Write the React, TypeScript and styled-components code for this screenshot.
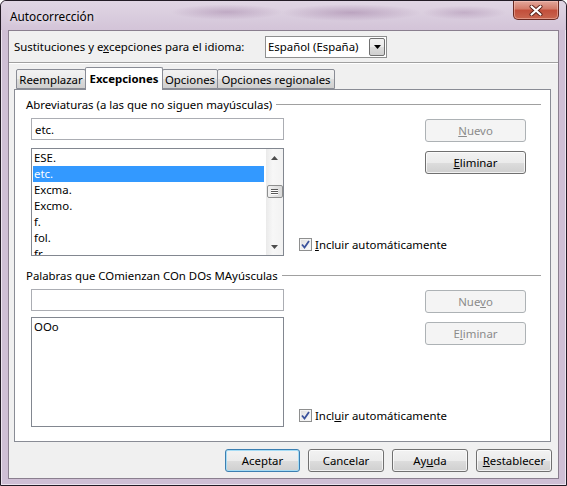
import styled, { createGlobalStyle } from "styled-components";

const GlobalStyle = createGlobalStyle`
	html, body {
		margin: 0;
		padding: 0;
		background: #ffffff;
	}
	body {
		font-family: "Noto Sans", "Open Sans", sans-serif;
		font-size: 11.4px;
		color: #000;
	}
	* {
		box-sizing: border-box;
	}
`;

const Window = styled.div`
	width: 567px;
	height: 486px;
	border: 1px solid #231c26;
	border-radius: 6px 6px 0 0;
	background: #cfbfd5;
	box-shadow: inset 0 0 0 1px #ece4ef;
	display: flex;
	flex-direction: column;
	padding: 0 7px 6px 7px;
	overflow: hidden;
`;

const TitleBar = styled.div`
	height: 29px;
	margin: 0 -7px;
	padding: 0 7px 0 9px;
	display: flex;
	align-items: flex-start;
	justify-content: space-between;
	border-radius: 5px 5px 0 0;
	background:
		radial-gradient(ellipse 100px 12px at 62% 40%, rgba(140, 100, 145, 0.4), transparent 70%),
		radial-gradient(ellipse 80px 11px at 40% 38%, rgba(140, 100, 145, 0.35), transparent 70%),
		radial-gradient(ellipse 60px 10px at 82% 40%, rgba(140, 100, 145, 0.3), transparent 70%),
		linear-gradient(to bottom, #e0d6e4, #d3c4d8);
`;

const Title = styled.span`
	align-self: center;
	font-size: 11.8px;
	color: #000;
	text-shadow: 0 0 6px rgba(255, 255, 255, 0.9);
`;

const CloseButton = styled.div`
	width: 46px;
	height: 19px;
	display: flex;
	align-items: center;
	justify-content: center;
	border: 1px solid #6a2a22;
	border-top: none;
	border-radius: 0 0 5px 5px;
	background: linear-gradient(to bottom, #e3a89c 0%, #d27a68 45%, #c24e3a 50%, #c86650 100%);
	box-shadow: inset 0 0 0 1px rgba(255, 210, 200, 0.45);
`;

const Client = styled.div`
	flex: 1;
	display: flex;
	flex-direction: column;
	border: 1px solid #8a7f8f;
	background: #f0f0f0;
`;

const LangRow = styled.div`
	height: 32px;
	display: flex;
	align-items: center;
	padding-left: 5px;
	border-bottom: 1px solid #a0a0a0;
	box-shadow: 0 1px 0 #ffffff;
`;

const LangLabel = styled.span`
	width: 251px;
`;

const Select = styled.div`
	width: 122px;
	height: 22px;
	display: flex;
	align-items: center;
	padding: 0 1px 0 2px;
	border: 1px solid #8e8f8f;
	background: #fff;
`;

const SelectText = styled.span`
	flex: 1;
`;

const DropButton = styled.div`
	width: 16px;
	height: 18px;
	display: flex;
	align-items: center;
	justify-content: center;
	border: 1px solid #707070;
	border-radius: 2px;
	background: linear-gradient(to bottom, #f2f2f2 0%, #ebebeb 50%, #dddddd 51%, #cfcfcf 100%);
`;

const Body = styled.div`
	flex: 1;
	display: flex;
	flex-direction: column;
	padding: 4px 7px 0 5px;
`;

const TabStrip = styled.div`
	height: 22px;
	display: flex;
	align-items: flex-end;
	padding-left: 2px;
`;

const Tab = styled.div<{ $active?: boolean; $w: number }>`
	position: relative;
	z-index: ${(p) => (p.$active ? 2 : 1)};
	width: ${(p) => p.$w}px;
	height: ${(p) => (p.$active ? 23 : 20)}px;
	margin-right: -1px;
	margin-bottom: ${(p) => (p.$active ? -1 : 0)}px;
	display: flex;
	align-items: center;
	justify-content: center;
	padding-bottom: ${(p) => (p.$active ? 2 : 0)}px;
	border: 1px solid #898c95;
	border-bottom: ${(p) => (p.$active ? "none" : "1px solid #898c95")};
	border-radius: 2px 2px 0 0;
	font-weight: ${(p) => (p.$active ? 700 : 400)};
	white-space: nowrap;
	background: ${(p) =>
		p.$active
			? "#ffffff"
			: "linear-gradient(to bottom, #f2f2f2 0%, #ebebeb 50%, #dddddd 51%, #cfcfcf 100%)"};
`;

const Panel = styled.div`
	flex: 1;
	display: flex;
	flex-direction: column;
	border: 1px solid #898c95;
	background: #ffffff;
	padding: 6px 9px 0 11px;
`;

const GroupTitle = styled.div<{ $top?: number }>`
	height: 16px;
	margin-top: ${(p) => p.$top ?? 0}px;
	display: flex;
	align-items: center;
	gap: 4px;
	white-space: nowrap;
	&::after {
		content: "";
		flex: 1;
		border-top: 1px solid #a0a0a0;
	}
`;

const GroupBody = styled.div`
	margin-top: 6px;
	padding-left: 5px;
	display: flex;
	gap: 15px;
`;

const LeftCol = styled.div<{ $gap: number }>`
	width: 253px;
	display: flex;
	flex-direction: column;
	gap: ${(p) => p.$gap}px;
`;

const RightCol = styled.div`
	width: 227px;
	display: flex;
	flex-direction: column;
	align-items: flex-end;
	gap: 9px;
	padding-top: 1px;
`;

const TextBox = styled.div`
	height: 22px;
	display: flex;
	align-items: center;
	padding-left: 3px;
	border: 1px solid #abadb3;
	background: #fff;
`;

const ListBox = styled.div<{ $h: number }>`
	height: ${(p) => p.$h}px;
	display: flex;
	border: 1px solid #828790;
	background: #fff;
	overflow: hidden;
`;

const Items = styled.div`
	flex: 1;
	padding: 1px 2px 0 1px;
`;

const Item = styled.div<{ $selected?: boolean }>`
	height: 16px;
	line-height: 16px;
	padding-left: 1px;
	white-space: nowrap;
	background: ${(p) => (p.$selected ? "#3399ff" : "transparent")};
	color: ${(p) => (p.$selected ? "#ffffff" : "#000000")};
`;

const ScrollBar = styled.div`
	width: 17px;
	display: flex;
	flex-direction: column;
	background: linear-gradient(to right, #eaeaea, #f7f7f7 40%, #f2f2f2);
`;

const ScrollArrow = styled.div`
	height: 17px;
	display: flex;
	align-items: center;
	justify-content: center;
`;

const Track = styled.div`
	flex: 1;
	display: flex;
	flex-direction: column;
	align-items: center;
`;

const Thumb = styled.div`
	width: 16px;
	height: 13px;
	margin-top: 19px;
	display: flex;
	flex-direction: column;
	align-items: center;
	justify-content: center;
	gap: 1px;
	border: 1px solid #8e8f8f;
	border-radius: 2px;
	background: linear-gradient(to right, #f3f3f3, #e4e4e4 50%, #d9d9d9);
`;

const Grip = styled.div`
	width: 7px;
	height: 1px;
	background: #5a5a5a;
	box-shadow: 0 1px 0 #ffffff;
`;

const Button = styled.button<{ $w: number; $default?: boolean }>`
	width: ${(p) => p.$w}px;
	height: 23px;
	padding: 0;
	font-family: inherit;
	font-size: 11.4px;
	color: #000;
	border: 1px solid ${(p) => (p.$default ? "#3c7fb1" : "#707070")};
	border-radius: 3px;
	background: linear-gradient(to bottom, #f2f2f2 0%, #ebebeb 50%, #dddddd 51%, #cfcfcf 100%);
	box-shadow: inset 0 0 0 1px ${(p) => (p.$default ? "#a6dcf5" : "rgba(255,255,255,0.7)")};
	&:disabled {
		color: #8b8b8b;
		border-color: #adb2b5;
		background: #f4f4f4;
		box-shadow: none;
	}
`;

const CheckRow = styled.label`
	margin-top: auto;
	margin-bottom: 4px;
	align-self: flex-start;
	height: 16px;
	display: flex;
	align-items: center;
	gap: 3px;
`;

const CheckBox = styled.span`
	width: 13px;
	height: 13px;
	display: flex;
	align-items: center;
	justify-content: center;
	border: 1px solid #8e8f8f;
	background: linear-gradient(135deg, #dcdcdc, #ffffff);
	box-shadow: inset 0 0 0 1px #f4f4f4;
`;

const Key = styled.span`
	text-decoration: underline;
	text-underline-offset: 1px;
`;

const Footer = styled.div`
	display: flex;
	justify-content: flex-end;
	gap: 8px;
	padding: 7px 0 6px 0;
	margin-right: -1px;
`;

const Check = () => (
	<svg width="9" height="9" viewBox="0 0 9 9">
		<path d="M1 4.5 L3.5 7.5 L8 1" fill="none" stroke="#3a529c" strokeWidth="1.8" />
	</svg>
);

const Arrow = ({ up }: { up?: boolean }) => (
	<svg width="7" height="4" viewBox="0 0 7 4">
		<polygon points={up ? "0,4 7,4 3.5,0" : "0,0 7,0 3.5,4"} fill="#4d4d4d" />
	</svg>
);

function WordGroup(props: {
	title: string;
	top?: number;
	text: string;
	items: string[];
	selected?: number;
	listHeight: number;
	gap: number;
	scroll?: boolean;
	nuevo: React.ReactNode;
	eliminar: React.ReactNode;
	eliminarOn?: boolean;
	incluir: React.ReactNode;
}) {
	return (
		<>
			<GroupTitle $top={props.top}>{props.title}</GroupTitle>
			<GroupBody>
				<LeftCol $gap={props.gap}>
					<TextBox>{props.text}</TextBox>
					<ListBox $h={props.listHeight}>
						<Items>
							{props.items.map((item, i) => (
								<Item key={item} $selected={i === props.selected}>
									{item}
								</Item>
							))}
						</Items>
						{props.scroll && (
							<ScrollBar>
								<ScrollArrow>
									<Arrow up />
								</ScrollArrow>
								<Track>
									<Thumb>
										<Grip />
										<Grip />
										<Grip />
									</Thumb>
								</Track>
								<ScrollArrow>
									<Arrow />
								</ScrollArrow>
							</ScrollBar>
						)}
					</ListBox>
				</LeftCol>
				<RightCol>
					<Button $w={101} disabled>
						{props.nuevo}
					</Button>
					<Button $w={101} disabled={!props.eliminarOn}>
						{props.eliminar}
					</Button>
					<CheckRow>
						<CheckBox>
							<Check />
						</CheckBox>
						<span>{props.incluir}</span>
					</CheckRow>
				</RightCol>
			</GroupBody>
		</>
	);
}

export default function App() {
	return (
		<>
			<GlobalStyle />
			<Window>
				<TitleBar>
					<Title>Autocorrección</Title>
					<CloseButton>
						<svg width="14" height="11" viewBox="0 0 14 11">
							<path d="M2.5 1.5 L11.5 9.5 M11.5 1.5 L2.5 9.5" stroke="#5a2118" strokeWidth="4" strokeLinecap="round" />
							<path d="M2.5 1.5 L11.5 9.5 M11.5 1.5 L2.5 9.5" stroke="#ffffff" strokeWidth="2.2" strokeLinecap="round" />
						</svg>
					</CloseButton>
				</TitleBar>
				<Client>
					<LangRow>
						<LangLabel>
							Sustituciones y e<Key>x</Key>cepciones para el idioma:
						</LangLabel>
						<Select>
							<SelectText>Español (España)</SelectText>
							<DropButton>
								<svg width="7" height="4" viewBox="0 0 7 4">
									<polygon points="0,0 7,0 3.5,4" fill="#000" />
								</svg>
							</DropButton>
						</Select>
					</LangRow>
					<Body>
						<TabStrip>
							<Tab $w={70}>Reemplazar</Tab>
							<Tab $w={78} $active>
								Excepciones
							</Tab>
							<Tab $w={56}>Opciones</Tab>
							<Tab $w={118}>Opciones regionales</Tab>
						</TabStrip>
						<Panel>
							<WordGroup
								title="Abreviaturas (a las que no siguen mayúsculas)"
								text="etc."
								items={["ESE.", "etc.", "Excma.", "Excmo.", "f.", "fol.", "fr."]}
								selected={1}
								listHeight={108}
								gap={8}
								scroll
								nuevo={
									<>
										<Key>N</Key>uevo
									</>
								}
								eliminar={
									<>
										<Key>E</Key>liminar
									</>
								}
								eliminarOn
								incluir={
									<>
										<Key>I</Key>ncluir automáticamente
									</>
								}
							/>
							<WordGroup
								title="Palabras que COmienzan COn DOs MAyúsculas"
								top={11}
								text=""
								items={["OOo"]}
								listHeight={110}
								gap={6}
								nuevo={
									<>
										Nue<Key>v</Key>o
									</>
								}
								eliminar={
									<>
										E<Key>l</Key>iminar
									</>
								}
								incluir={
									<>
										Incl<Key>u</Key>ir automáticamente
									</>
								}
							/>
						</Panel>
						<Footer>
							<Button $w={75} $default>
								Aceptar
							</Button>
							<Button $w={76}>Cancelar</Button>
							<Button $w={76}>
								Ay<Key>u</Key>da
							</Button>
							<Button $w={76}>
								<Key>R</Key>establecer
							</Button>
						</Footer>
					</Body>
				</Client>
			</Window>
		</>
	);
}
